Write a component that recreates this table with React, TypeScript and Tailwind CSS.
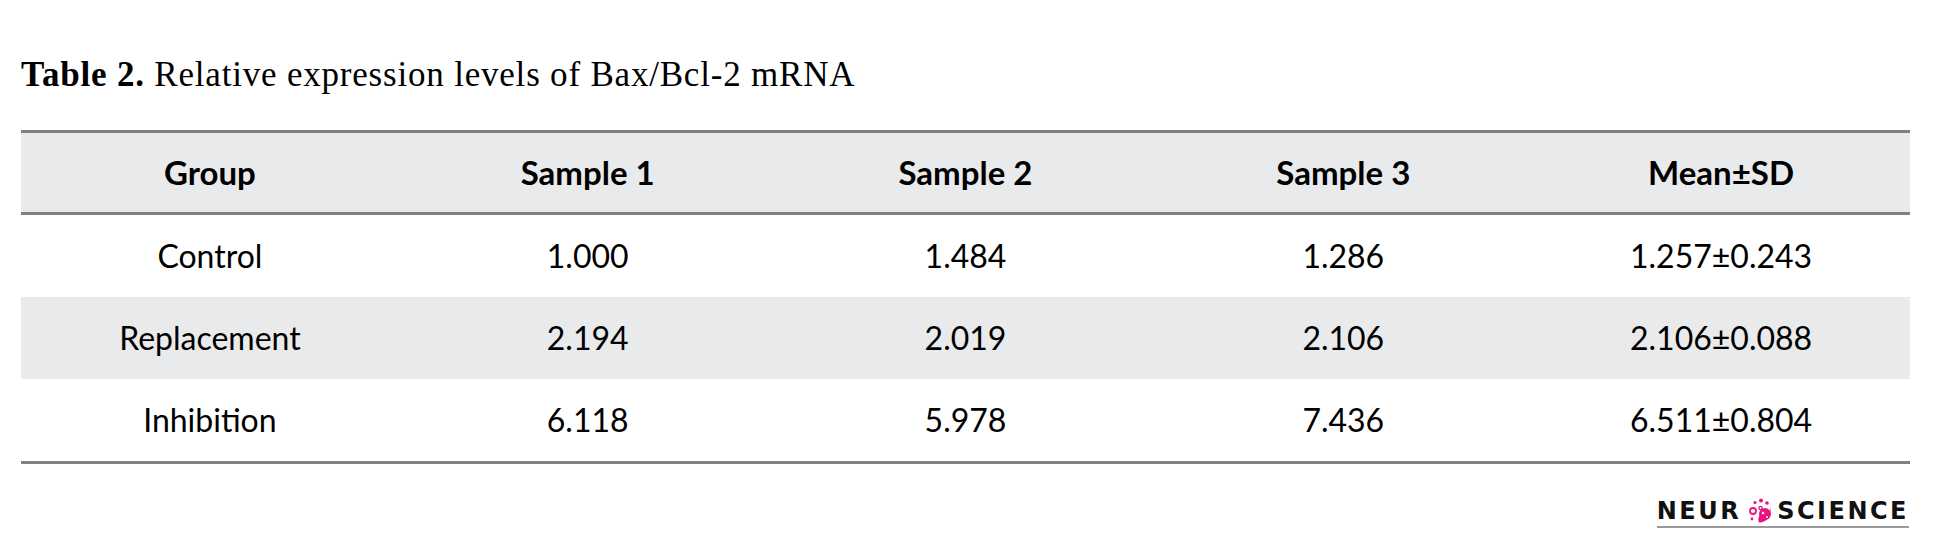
import React from "react";

const headers = ["Group", "Sample 1", "Sample 2", "Sample 3", "Mean±SD"];
const rows = [
  ["Control", "1.000", "1.484", "1.286", "1.257±0.243"],
  ["Replacement", "2.194", "2.019", "2.106", "2.106±0.088"],
  ["Inhibition", "6.118", "5.978", "7.436", "6.511±0.804"],
];

function CellIcon() {
  return (
    <svg width="30" height="26" viewBox="0 0 30 26" className="mx-[3px]">
      <circle cx="9" cy="13" r="3" fill="none" stroke="#e8157f" strokeWidth="1.8" />
      <circle cx="11" cy="4.5" r="1.6" fill="#e8157f" />
      <circle cx="17" cy="2.5" r="2" fill="#e8157f" />
      <circle cx="23" cy="5" r="1.8" fill="#e8157f" />
      <circle cx="16.5" cy="10" r="1.6" fill="none" stroke="#e8157f" strokeWidth="1.3" />
      <circle cx="8" cy="21" r="1.4" fill="#e8157f" />
      <path d="M25.5 9 A11 11 0 0 1 15 24.5 A7 7 0 0 1 16 17 A6 6 0 0 0 25.5 9 Z" fill="#e8157f" />
      <circle cx="21" cy="16" r="6" fill="#e8157f" />
      <circle cx="19" cy="15" r="1.3" fill="#fff" />
      <circle cx="23" cy="19" r="1" fill="#fff" />
    </svg>
  );
}

export default function App() {
  return (
    <div className="w-[1943px] h-[545px] bg-white relative overflow-hidden">
      <div className="h-[130px] pl-[21px] pt-[57px] leading-none text-[35px] tracking-[0.8px] text-black [font-family:'Liberation_Serif',serif]">
        <span className="font-bold">Table 2.</span> Relative expression levels of Bax/Bcl-2 mRNA
      </div>
      <div className="ml-[21px] w-[1889px] border-t-[3px] border-b-[3px] border-[#808080] [font-family:Lato,sans-serif] text-black">
        <div className="grid grid-cols-5 h-[82px] items-center bg-[#e9eaec] border-b-[3px] border-[#808080] text-[33px] font-bold">
          {headers.map((h) => (
            <div key={h} className="text-center">{h}</div>
          ))}
        </div>
        {rows.map((r, i) => (
          <div
            key={r[0]}
            className={`grid grid-cols-5 h-[82px] items-center text-[32px] ${i === 1 ? "bg-[#e9eaec]" : "bg-white"}`}
          >
            {r.map((c, j) => (
              <div key={j} className="text-center">{c}</div>
            ))}
          </div>
        ))}
      </div>
      <div className="flex justify-end pr-[34px] pt-[34px]">
        <div className="flex flex-col items-stretch">
          <div className="flex items-center h-[26px] leading-none text-[24px] font-bold tracking-[2.5px] text-[#111] [font-family:'DejaVu_Sans',sans-serif]">
            <span>NEUR</span>
            <CellIcon />
            <span>SCIENCE</span>
          </div>
          <div className="h-[2px] bg-[#9a9a9a] mt-[2px]" />
        </div>
      </div>
    </div>
  );
}
